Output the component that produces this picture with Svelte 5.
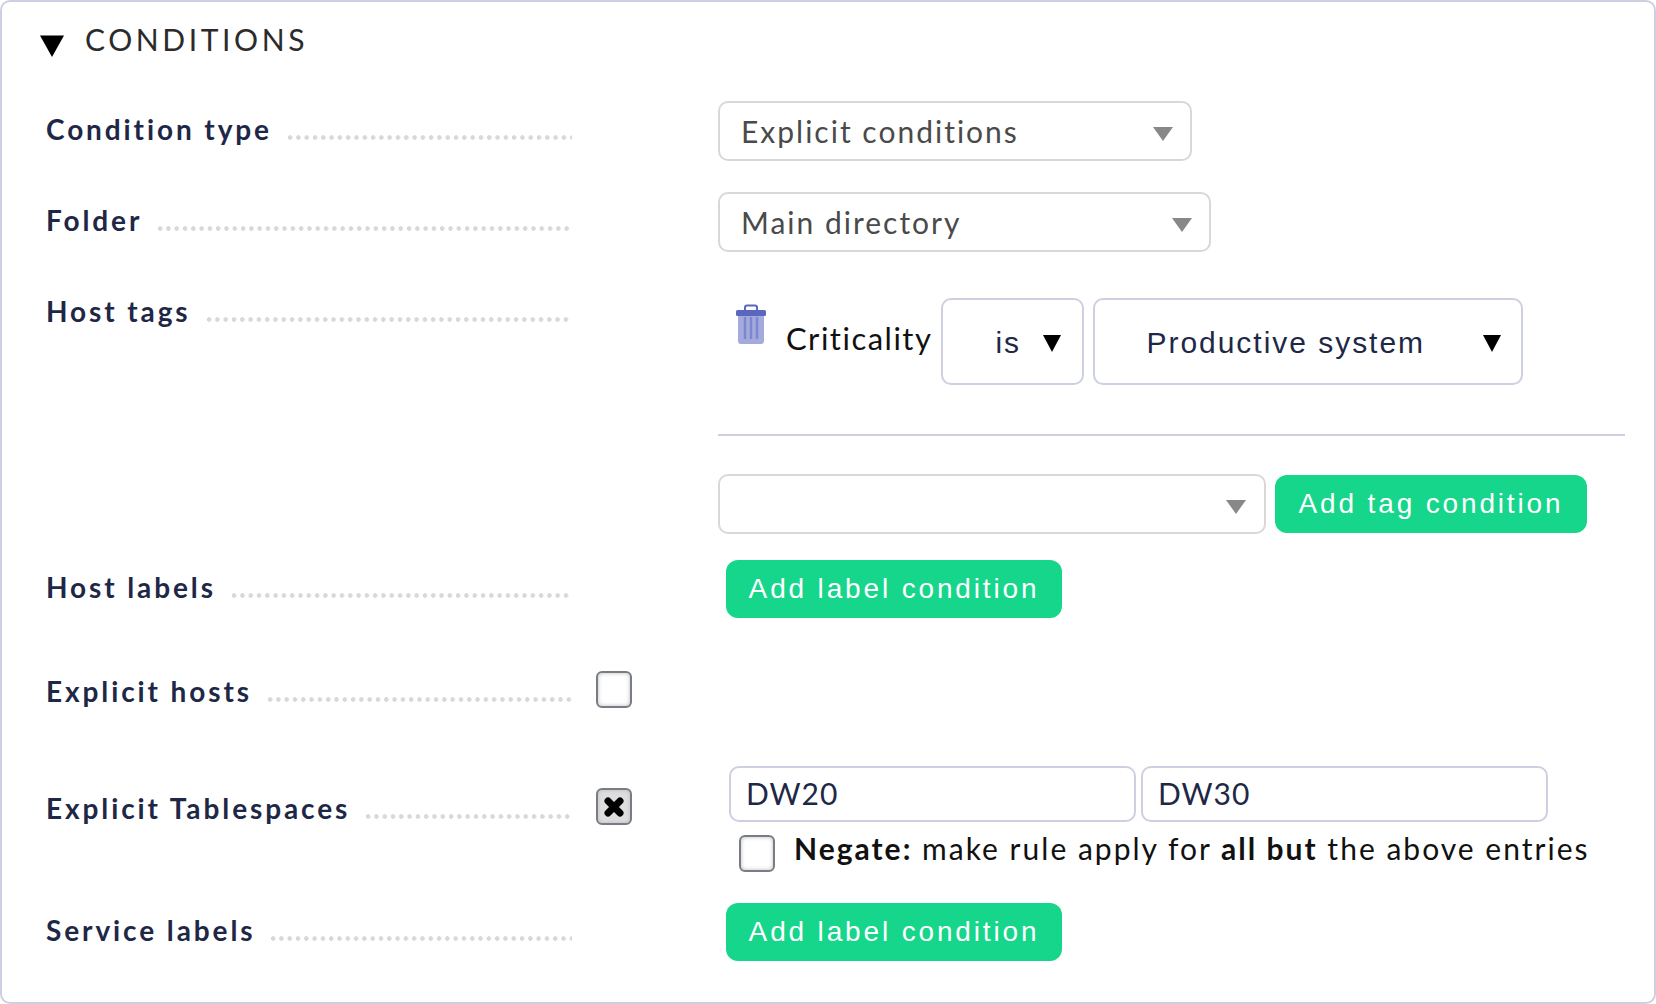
<script>
  const greenLabel = 'Add label condition';
</script>

<div class="box">
  <div class="head">
    <svg class="caret" viewBox="0 0 20 20" width="24" height="24"><path d="M0 2h20L10 20z" /></svg>
    <span>CONDITIONS</span>
  </div>

  <div class="row r1">
    <div class="label"><span>Condition type</span><i></i></div>
    <div class="gutter"></div>
    <div class="value"><div class="sel s1"><span>Explicit conditions</span><b></b></div></div>
  </div>

  <div class="row r2">
    <div class="label"><span>Folder</span><i></i></div>
    <div class="gutter"></div>
    <div class="value"><div class="sel s2"><span>Main directory</span><b></b></div></div>
  </div>

  <div class="row r3">
    <div class="label"><span>Host tags</span><i></i></div>
    <div class="gutter"></div>
    <div class="value">
      <div class="tagline">
        <svg class="trash" width="32" height="42" viewBox="0 0 32 42">
          <path d="M10 6V3.500Q10 1.500 12 1.500H20Q22 1.500 22 3.500V6" fill="none" stroke="#5b66bf" stroke-width="2"/>
          <rect x="1" y="6" width="30" height="6" rx="1.500" fill="#5b66bf"/>
          <path d="M3 12H29V37Q29 40 26 40H6Q3 40 3 37Z" fill="#a3abdc"/>
          <path d="M10 13V35M16 13V35M22 13V35" stroke="#7c87cf" stroke-width="2.500"/>
        </svg>
        <span class="crit">Criticality</span>
        <div class="dd d1"><span>is</span><em></em></div>
        <div class="dd d2"><span>Productive system</span><em></em></div>
      </div>
      <hr />
      <div class="addtag">
        <div class="sel s3"><b></b></div>
        <button>Add tag condition</button>
      </div>
    </div>
  </div>

  <div class="row r4">
    <div class="label"><span>Host labels</span><i></i></div>
    <div class="gutter"></div>
    <div class="value"><button class="lbl">{greenLabel}</button></div>
  </div>

  <div class="row r5">
    <div class="label"><span>Explicit hosts</span><i></i></div>
    <div class="gutter"><div class="chk"></div></div>
    <div class="value"></div>
  </div>

  <div class="row r6">
    <div class="label"><span>Explicit Tablespaces</span><i></i></div>
    <div class="gutter"><div class="chk on">
      <svg width="22" height="22" viewBox="0 0 22 22"><path d="M5 5L17 17M17 5L5 17" stroke="#000" stroke-width="7" stroke-linecap="round"/></svg>
    </div></div>
    <div class="value">
      <div class="inputs"><div class="inp">DW20</div><div class="inp">DW30</div></div>
      <div class="negate"><div class="chk"></div><p><strong>Negate:</strong> make rule apply for <strong>all but</strong> the above entries</p></div>
    </div>
  </div>

  <div class="row r7">
    <div class="label"><span>Service labels</span><i></i></div>
    <div class="gutter"></div>
    <div class="value"><button class="lbl">{greenLabel}</button></div>
  </div>
</div>

<style>
  :global(body) { margin: 0; background: #fff; }
  .box {
    box-sizing: border-box; width: 1656px; height: 1004px;
    border: 2px solid #cdd0e0; border-radius: 10px; background: #fff;
    font-family: Lato, sans-serif; position: relative; overflow: hidden;
  }
  .head { display: flex; align-items: center; padding: 17px 0 0 38px; height: 40px; }
  .caret { fill: #000; margin-top: 11px; }
  .head span { margin-left: 21px; font-size: 30px; letter-spacing: 3.600px; color: #2b2b2b; }
  .row { display: flex; align-items: flex-start; }
  .label { width: 526px; margin-left: 44px; margin-right: 2px; display: flex; align-items: baseline; font-size: 28px; font-weight: 700; letter-spacing: 2.900px; color: #1e2846; flex: none; }
  .label span { white-space: nowrap; }
  .label i { flex: 1; margin-left: 16px; height: 5px; background: radial-gradient(circle at 2.100px 2.500px, #d8d8d8 2px, transparent 2.500px) 0 0 / 8.300px 5px repeat-x; }
  .gutter { width: 144px; flex: none; }
  .value { flex: 1; min-width: 0; }

  .sel { box-sizing: border-box; height: 60px; border: 2px solid #d8d8d8; border-radius: 10px; display: flex; align-items: center; position: relative; padding-left: 21px; font-size: 30px; letter-spacing: 2px; color: #4a4a4a; }
  .sel b { position: absolute; right: 17px; top: 24px; border: 10px solid transparent; border-top: 14px solid #888; border-bottom: 0; }
  .s1 { width: 474px; }
  .s2 { width: 493px; }
  .s3 { width: 548px; }
  .s3 b { right: 18px; }

  .r1 { margin-top: 42px; }
  .r1 .label { padding-top: 11px; }
  .r2 .label { padding-top: 11px; }
  .r2 { margin-top: 31px; }
  .r3 { margin-top: 31px; }
  .r3 .label { padding-top: 11px; }
  .tagline { display: flex; align-items: flex-start; margin-top: 15px; }
  .trash { margin: 6px 0 0 17px; flex: none; }
  .crit { font-size: 31px; letter-spacing: 1.500px; color: #111; margin: 21px 0 0 19px; white-space: nowrap; }
  .dd { box-sizing: border-box; height: 87px; border: 2px solid #cdd0e0; border-radius: 10px; padding-top: 2px; font-family: "Liberation Sans", sans-serif; font-size: 30px; letter-spacing: 1.970px; color: #1e2846; display: flex; align-items: center; position: relative; }
  .dd em { position: absolute; right: 21px; top: 35px; border: 9px solid transparent; border-top: 17px solid #000; border-bottom: 0; }
  .d1 { width: 143px; margin-left: 9px; padding-left: 52px; }
  .d2 { width: 430px; margin-left: 9px; padding-left: 51px; }
  .d2 em { right: 20px; }
  hr { border: 0; height: 2px; background: #cdd0e0; margin: 49px 31px 0 0; width: 907px; }
  .addtag { display: flex; align-items: center; margin-top: 38px; }
  button { box-sizing: border-box; height: 58px; border: 0; border-radius: 12px; background: #15d68a; color: #fff; font-family: "Liberation Sans", sans-serif; font-size: 28px; letter-spacing: 2.850px; padding: 0 10px; white-space: nowrap; }
  .addtag button { margin-left: 9px; width: 312px; }
  .lbl { margin-left: 8px; width: 336px; }

  .r4 { margin-top: 26px; }
  .r4 .label { padding-top: 10px; }
  .r5 { margin-top: 53px; }
  .r5 .label { padding-top: 3px; }
  .chk { box-sizing: border-box; width: 36px; height: 37px; border: 2.500px solid #787c84; border-radius: 6px; margin-left: 22px; background: #fff; box-shadow: inset 0 0 4px #bbb; display: flex; align-items: center; justify-content: center; }
  .chk.on { background: #dedede; }
  .r6 { margin-top: 58px; }
  .r6 .label { padding-top: 25px; }
  .r6 .gutter { padding-top: 22px; }
  .inputs { display: flex; gap: 5px; margin-left: 11px; }
  .inp { box-sizing: border-box; width: 407px; height: 56px; border: 2px solid #cdd0e0; border-radius: 10px; font-size: 30px; letter-spacing: 1px; color: #1e2846; padding: 7px 0 0 15px; }
  .negate { display: flex; align-items: center; margin: 13px 0 0 -3px; }
  .negate .chk { margin-left: 24px; }
  .negate p { margin: -12px 0 0 19px; font-size: 30px; letter-spacing: 2.010px; color: #111; white-space: nowrap; }
  .r7 { margin-top: 0; }
  .r7 .value { margin-top: 31px; }
  .r7 .label { padding-top: 41px; }
</style>
